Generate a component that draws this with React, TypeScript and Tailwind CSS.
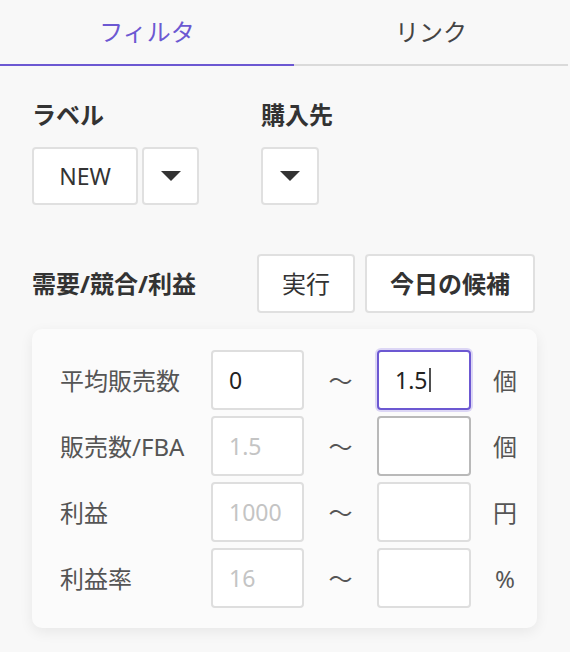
const FONT = "font-['Noto_Sans','Noto_Sans_CJK_JP',sans-serif]"

/* Filter rows */
const ROWS = [
  { label: '平均販売数', min: '0', max: '1.5', unit: '個', focused: true },
  { label: '販売数/FBA', min: '', minHint: '1.5', max: '', unit: '個', hover: true },
  { label: '利益', min: '', minHint: '1000', max: '', unit: '円' },
  { label: '利益率', min: '', minHint: '16', max: '', unit: '%' },
]

function Caret() {
  return (
    <svg width="6" height="24" viewBox="0 0 6 24" className="ml-[1px]">
      <path d="M2 0 L2 24" stroke="#222" strokeWidth="1.6" />
    </svg>
  )
}

function Triangle() {
  return (
    <svg width="20" height="10" viewBox="0 0 20 10">
      <path d="M0 0 L20 0 L10 10 Z" fill="#333" />
    </svg>
  )
}

function RangeBox({
  value,
  hint,
  width,
  focused,
  hover,
}: {
  value: string
  hint?: string
  width: string
  focused?: boolean
  hover?: boolean
}) {
  let border = 'border-2 border-[#dedede]'
  if (focused) border = 'border-2 border-[#6c58d2] ring-2 ring-[#dcd6f5]'
  if (hover) border = 'border-2 border-[#b9b9b9]'
  return (
    <div
      className={`flex h-[60px] shrink-0 items-center rounded-[4px] bg-white pl-[16px] text-[23px] ${width} ${border}`}
    >
      {value ? (
        <span className="text-[#222]">{value}</span>
      ) : (
        <span className="text-[#c4c4c4]">{hint}</span>
      )}
      {focused && <Caret />}
    </div>
  )
}

export default function App() {
  return (
    <div className={`min-h-[652px] w-[570px] bg-[#f8f8f8] ${FONT}`}>
      {/* Tabs */}
      <div className="flex h-[66px] w-[568px] text-[24px]">
        <div className="flex w-[294px] items-center justify-center border-b-2 border-[#6c58d2] text-[#6c58d2]">
          フィルタ
        </div>
        <div className="flex flex-1 items-center justify-center border-b-2 border-[#dadada] text-[#444]">
          リンク
        </div>
      </div>

      {/* Label / Supplier */}
      <div className="flex gap-[62px] pl-[32px] pt-[32px]">
        <div>
          <div className="text-[24px] font-bold leading-[33px] text-[#333]">ラベル</div>
          <div className="mt-[16px] flex gap-[4px]">
            <div className="flex h-[58px] w-[106px] items-center justify-center rounded-[4px] border-2 border-[#e0e0e0] bg-white text-[23px] text-[#333]">
              NEW
            </div>
            <div className="flex h-[58px] w-[57px] items-center justify-center rounded-[4px] border-2 border-[#e0e0e0] bg-white">
              <Triangle />
            </div>
          </div>
        </div>
        <div>
          <div className="text-[24px] font-bold leading-[33px] text-[#333]">購入先</div>
          <div className="mt-[16px] flex h-[58px] w-[58px] items-center justify-center rounded-[4px] border-2 border-[#e0e0e0] bg-white">
            <Triangle />
          </div>
        </div>
      </div>

      {/* Demand / Competition / Profit */}
      <div className="mt-[49px] flex items-center pl-[32px]">
        <div className="w-[225px] text-[24px] font-bold leading-[33px] text-[#333]">需要/競合/利益</div>
        <div className="flex gap-[10px]">
          <button className="h-[59px] w-[98px] rounded-[4px] border-2 border-[#e0e0e0] bg-white text-[24px] leading-[33px] text-[#333]">
            実行
          </button>
          <button className="h-[59px] w-[170px] rounded-[4px] border-2 border-[#e0e0e0] bg-white text-[24px] font-bold leading-[33px] text-[#333]">
            今日の候補
          </button>
        </div>
      </div>

      {/* Range Card */}
      <div className="ml-[32px] mt-[16px] w-[505px] rounded-[10px] bg-[#fbfbfb] pb-[20px] pl-[28px] pt-[21px] shadow-[0_4px_14px_rgba(0,0,0,0.07)]">
        <div className="flex flex-col gap-[6px]">
          {ROWS.map((row) => (
            <div key={row.label} className="flex h-[60px] items-center text-[24px] leading-[33px]">
              <div className="w-[151px] shrink-0 whitespace-nowrap text-[#555]">{row.label}</div>
              <RangeBox value={row.min} hint={row.minHint} width="w-[93px]" />
              <div className="w-[73px] shrink-0 text-center text-[#555]">〜</div>
              <RangeBox value={row.max} focused={row.focused} hover={row.hover} width="w-[94px]" />
              <div className="w-[68px] shrink-0 text-center text-[#555]">{row.unit}</div>
            </div>
          ))}
        </div>
      </div>
    </div>
  )
}
